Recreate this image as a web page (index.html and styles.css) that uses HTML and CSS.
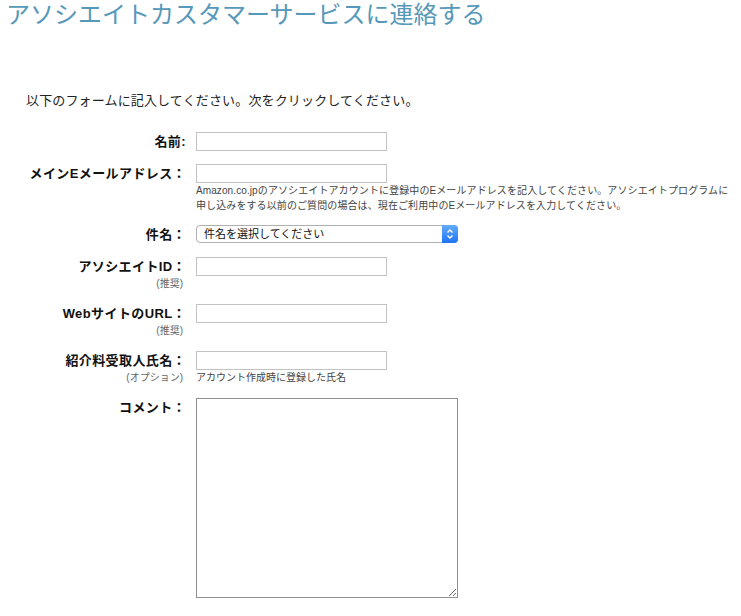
FILE: index.html
```html
<!DOCTYPE html>
<html>
	<head>
		<meta charset="UTF-8">
		<title>アソシエイトカスタマーサービスに連絡する</title>
		<link rel="stylesheet" href="styles.css">
	</head>
	<body>
		<h1 class="title">アソシエイトカスタマーサービスに連絡する</h1>
		<p class="intro">以下のフォームに記入してください。次をクリックしてください。</p>
		<form class="contact" action="javascript:;">
			<div class="label"><label for="name">名前:</label></div>
			<div class="field"><input type="text" id="name" class="text"></div>

			<div class="label"><label for="mail">メインEメールアドレス：</label></div>
			<div class="field">
				<input type="text" id="mail" class="text">
				<p class="note help">Amazon.co.jpのアソシエイトアカウントに登録中のEメールアドレスを記入してください。アソシエイトプログラムに<br>申し込みをする以前のご質問の場合は、現在ご利用中のEメールアドレスを入力してください。</p>
			</div>

			<div class="label"><label for="subject">件名：</label></div>
			<div class="field">
				<div class="select">
					<select id="subject">
						<option>件名を選択してください</option>
					</select>
					<span class="arrow">
						<svg width="8" height="12" viewBox="0 0 8 12"><path d="M1.5 4.5 L4 2 L6.5 4.5 M1.5 7.5 L4 10 L6.5 7.5" fill="none" stroke="#fff" stroke-width="1.4"/></svg>
					</span>
				</div>
			</div>

			<div class="label"><label for="aid">アソシエイトID：</label><span class="sub">(推奨)</span></div>
			<div class="field"><input type="text" id="aid" class="text"></div>

			<div class="label"><label for="url">WebサイトのURL：</label><span class="sub">(推奨)</span></div>
			<div class="field"><input type="text" id="url" class="text"></div>

			<div class="label"><label for="payee">紹介料受取人氏名：</label><span class="sub">(オプション)</span></div>
			<div class="field">
				<input type="text" id="payee" class="text">
				<p class="note">アカウント作成時に登録した氏名</p>
			</div>

			<div class="label"><label for="comment">コメント：</label></div>
			<div class="field"><textarea id="comment" class="comment"></textarea></div>
		</form>
	</body>
</html>
```

FILE: styles.css
```css
*{
	margin:0px;
	padding:0px;
}
body{
	font-family:"Liberation Sans","Noto Sans CJK JP",sans-serif;
	color:#222;
	background:#fff;
}
.title{
	font-size:24px;
	font-weight:normal;
	line-height:30px;
	color:#5698b9;
	padding-left:6px;
}
.intro{
	font-size:13px;
	line-height:20px;
	letter-spacing:0.15px;
	margin:61px 0 21px 26px;
}
.contact{
	display:grid;
	grid-template-columns:186px 1fr;
	column-gap:10px;
	row-gap:13px;
}
.label{
	text-align:right;
}
.label label{
	display:block;
	font-size:13px;
	font-weight:bold;
	line-height:19px;
	letter-spacing:0.4px;
	color:#111;
}
.sub{
	display:block;
	font-size:10px;
	line-height:15px;
	color:#666;
	padding-right:3px;
}
.text{
	display:block;
	width:191px;
	height:19px;
	border:1px solid #c3c3c3;
	box-sizing:border-box;
	font-size:12px;
}
.note{
	font-size:10px;
	line-height:15px;
	color:#444;
}
.help{
	letter-spacing:0.1px;
	margin-bottom:-1px;
}
.select{
	display:flex;
	width:262px;
	height:18px;
	border:1px solid #b0b0b0;
	border-radius:4px;
	box-sizing:border-box;
	background:#fff;
}
.select select{
	flex:1;
	appearance:none;
	-webkit-appearance:none;
	border:none;
	background:transparent;
	font-family:"Liberation Sans","Noto Sans CJK JP",sans-serif;
	font-size:11px;
	color:#111;
	padding-left:7px;
	outline:none;
}
.arrow{
	display:flex;
	align-items:center;
	justify-content:center;
	width:16px;
	margin:-1px -1px -1px 0;
	border-radius:0 4px 4px 0;
	background:linear-gradient(#63abff,#1f73f2);
}
.comment{
	display:block;
	width:262px;
	height:200px;
	border:1px solid #8f8f8f;
	box-sizing:border-box;
	resize:both;
}
```
